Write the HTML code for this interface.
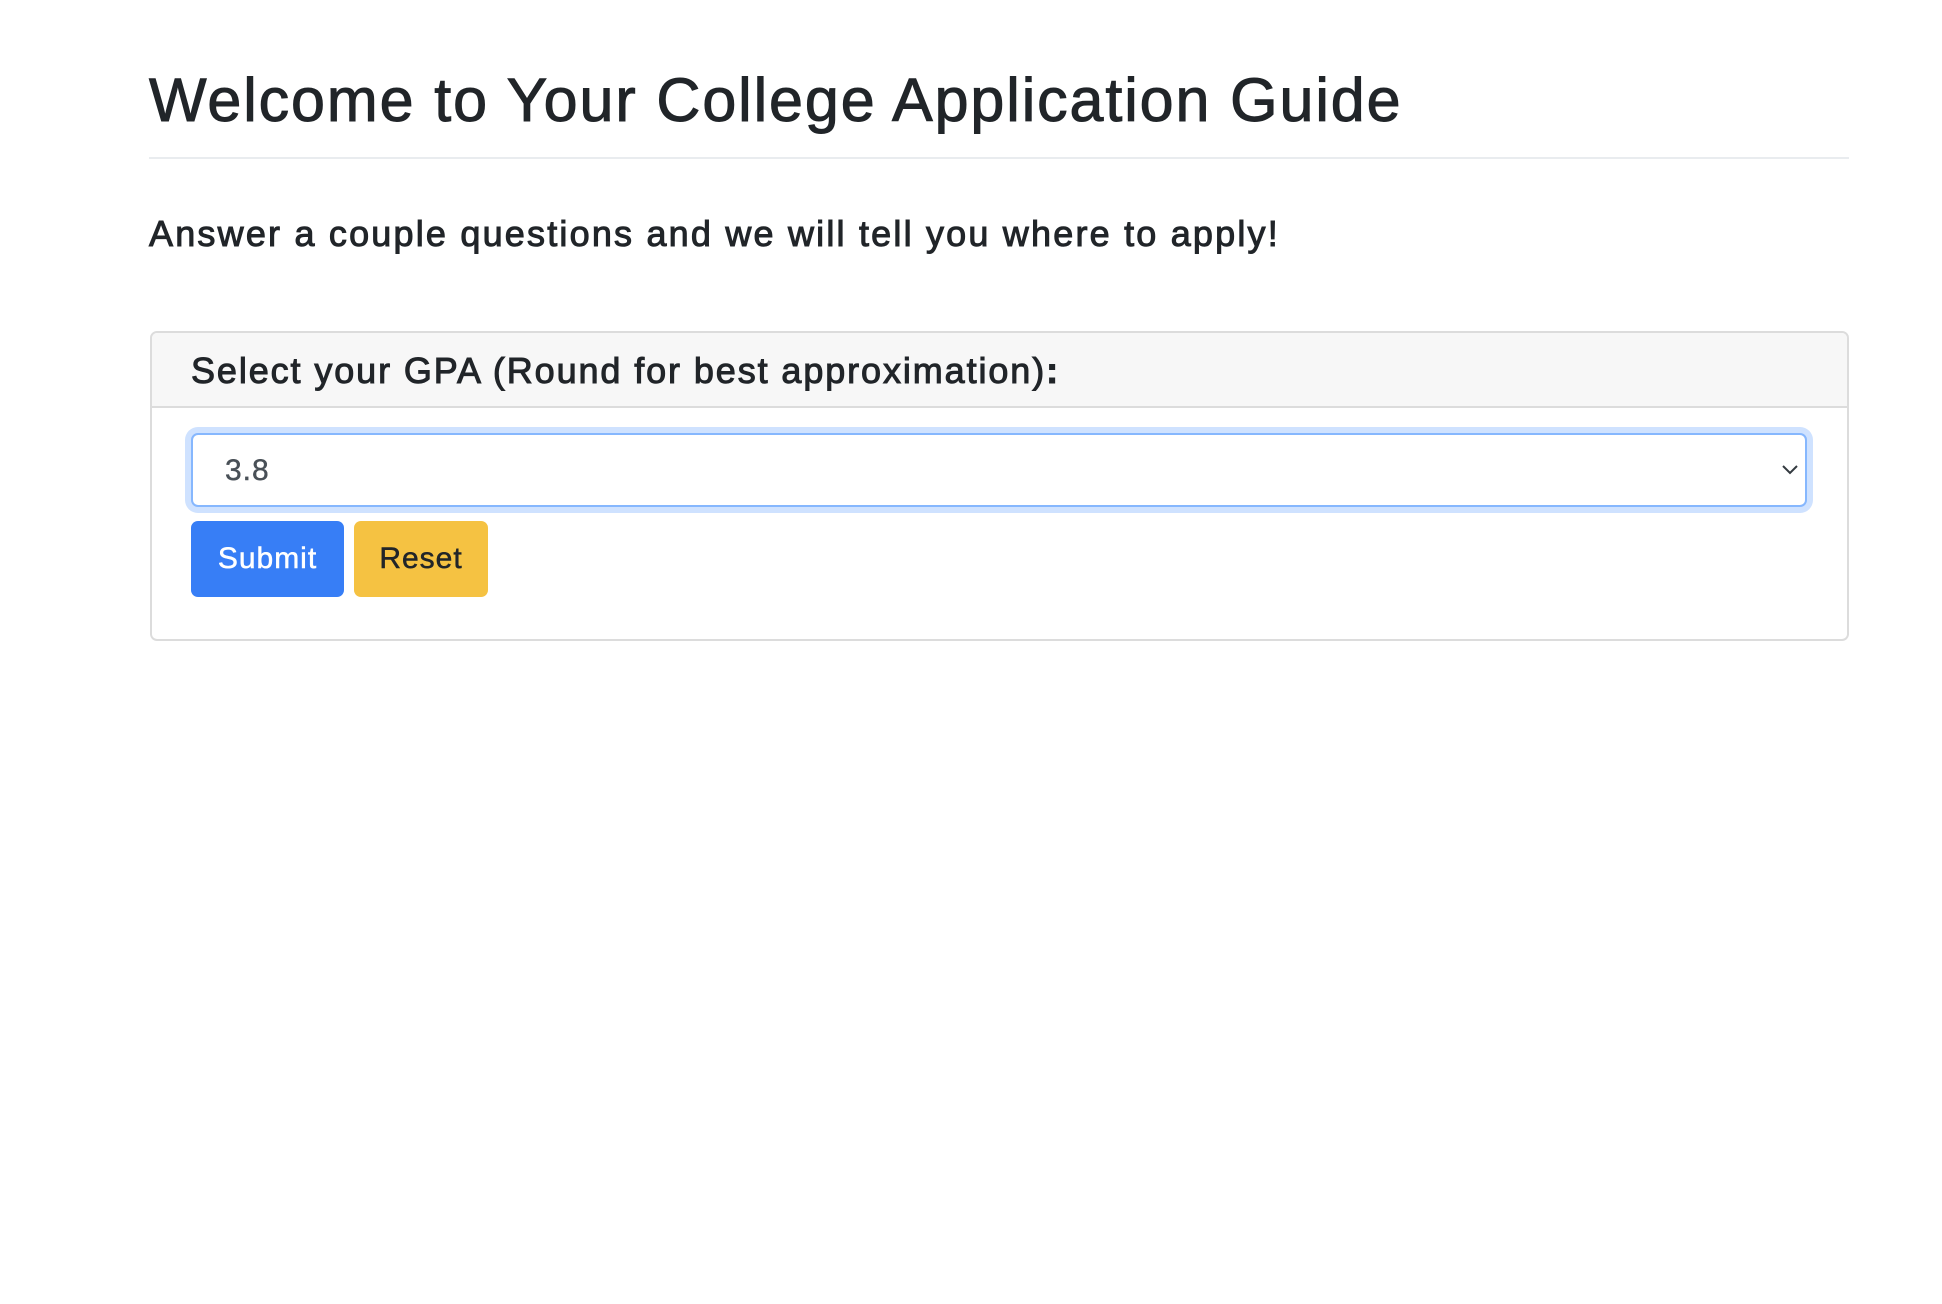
<!DOCTYPE html>
<html><head><meta charset="utf-8"><style>
*{box-sizing:border-box;margin:0;padding:0}
body{width:1942px;height:1304px;background:#fff;font-family:"Liberation Sans",sans-serif;color:#212529;position:relative;overflow:hidden}
.a{position:absolute;white-space:nowrap;-webkit-text-stroke:1px #212529}
h1{left:149px;top:60px;font-size:61px;font-weight:normal;line-height:80px;letter-spacing:1.9px}
.hr{position:absolute;left:149px;top:157px;width:1700px;height:2px;background:#e9ecef}
.p{left:149px;top:210px;font-size:36px;line-height:48px;letter-spacing:2.2px}
.card{position:absolute;left:150px;top:331px;width:1699px;height:310px;border:2px solid #dcdcdc;border-radius:7px;overflow:hidden}
.hd{position:absolute;left:0;top:0;right:0;height:75px;background:#f7f7f7;border-bottom:2px solid #dcdcdc}
.lbl{left:191px;top:347px;font-size:36px;line-height:48px;letter-spacing:1.9px}
.sel{position:absolute;left:191px;top:433px;width:1616px;height:74px;border:2px solid #86b7fe;border-radius:7px;box-shadow:0 0 0 6px #cfe2ff;background:#fff}
.v{position:absolute;left:225px;top:453px;font-size:30px;color:#495057;line-height:36px;letter-spacing:1px;-webkit-text-stroke:0.4px #495057}
.btn{position:absolute;top:521px;height:76px;border-radius:7px;font-size:30px;line-height:76px;text-align:center;letter-spacing:1px}
</style></head><body>
<h1 class="a">Welcome to Your College Application Guide</h1>
<div class="hr"></div>
<div class="a p">Answer a couple questions and we will tell you where to apply!</div>
<div class="card"><div class="hd"></div></div>
<div class="a lbl">Select your GPA (Round for best approximation)<b style="font-weight:bold">:</b></div>
<div class="sel"></div>
<div class="v">3.8</div>
<svg style="position:absolute;left:1781px;top:464px" width="18" height="12" viewBox="0 0 18 12"><path d="M2 2 L9 9 L16 2" stroke="#343a40" stroke-width="2" fill="none"/></svg>
<div class="btn" style="left:191px;width:153px;background:#377ef6;color:#fff;-webkit-text-stroke:0.5px #fff">Submit</div>
<div class="btn" style="left:354px;width:134px;background:#f5c242;color:#212529;-webkit-text-stroke:0.5px #212529">Reset</div>
</body></html>
